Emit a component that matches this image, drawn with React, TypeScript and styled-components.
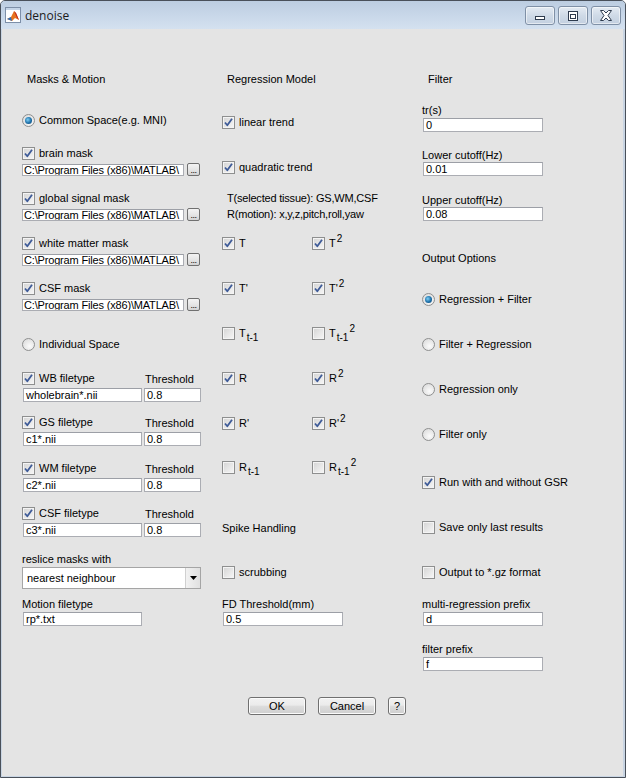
import React from "react";
import styled, { createGlobalStyle } from "styled-components";

const GlobalStyle = createGlobalStyle`
  html, body { margin: 0; padding: 0; }
  body {
    background: #ffffff;
    font-family: "Liberation Sans", Arial, sans-serif;
    font-size: 11px;
    color: #000;
  }
  * { box-sizing: border-box; }
`;

const Window = styled.div`
  width: 626px;
  height: 778px;
  display: flex;
  flex-direction: column;
  border: 1px solid #49505a;
  border-radius: 5px 5px 0 0;
  background: #c9d5e3;
  overflow: hidden;
`;

const TitleBar = styled.div`
  height: 28px;
  flex: none;
  display: flex;
  align-items: center;
  padding: 0 4px 0 4px;
  background: linear-gradient(#bccde1, #d4e1f0);
`;

const TitleText = styled.span`
  font-family: "Open Sans", "Noto Sans", sans-serif;
  font-size: 12px;
  color: #1b1b1b;
  margin-left: 4px;
  flex: 1;
`;

const CaptionGroup = styled.div`
  display: flex;
  gap: 3px;
  align-self: flex-start;
  margin-top: 5px;
`;

const CaptionButton = styled.div`
  width: 30px;
  height: 19px;
  border: 1px solid #7f90a6;
  border-radius: 3px;
  background: linear-gradient(#e4ebf3, #cfdae7 50%, #c3d0e0);
  display: flex;
  align-items: center;
  justify-content: center;
  box-shadow: inset 0 0 0 1px rgba(255, 255, 255, 0.55);
`;

const Body = styled.div`
  flex: 1;
  margin: 0 2px 1px 1px;
  background: #e4e4e4;
  display: flex;
  flex-direction: column;
`;

const Columns = styled.div`
  display: flex;
  padding-left: 20px;
  align-items: flex-start;
`;

const Column = styled.div`
  width: 200px;
  display: flex;
  flex-direction: column;
  align-items: flex-start;
`;

type Mt = { $mt?: number };

const Heading = styled.div<Mt & { $indent?: number }>`
  margin-top: ${(p) => p.$mt ?? 0}px;
  padding-left: ${(p) => p.$indent ?? 5}px;
  height: 14px;
  line-height: 14px;
  white-space: nowrap;
`;

const Label = styled.div<Mt & { $ml?: number }>`
  margin-top: ${(p) => p.$mt ?? 0}px;
  margin-left: ${(p) => p.$ml ?? 0}px;
  height: 14px;
  line-height: 14px;
  white-space: nowrap;
`;

const ThresholdLabel = styled.div`
  height: 14px;
  padding-top: 1px;
  line-height: 14px;
  white-space: nowrap;
`;

const InfoText = styled.div<Mt>`
  margin-top: ${(p) => p.$mt ?? 0}px;
  padding-left: 5px;
  line-height: 16px;
  letter-spacing: -0.2px;
  white-space: nowrap;
`;

const OptionRow = styled.div<Mt & { $w?: number }>`
  margin-top: ${(p) => p.$mt ?? 0}px;
  width: ${(p) => (p.$w ? `${p.$w}px` : "auto")};
  height: 14px;
  display: flex;
  align-items: center;
  gap: 4px;
  white-space: nowrap;
  line-height: 14px;
`;

const Row = styled.div<Mt & { $ml?: number; $gap?: number }>`
  margin-top: ${(p) => p.$mt ?? 0}px;
  margin-left: ${(p) => p.$ml ?? 0}px;
  display: flex;
  align-items: flex-start;
  gap: ${(p) => p.$gap ?? 0}px;
`;

const Box = styled.span`
  width: 13px;
  height: 13px;
  flex: none;
  border: 1px solid #8e8f8f;
  background: linear-gradient(135deg, #d4d4d4, #f7f7f7);
  box-shadow: inset 0 0 0 1px #f4f4f4;
  display: flex;
  align-items: center;
  justify-content: center;
`;

const Radio = styled.span<{ $checked?: boolean }>`
  width: 13px;
  height: 13px;
  flex: none;
  border-radius: 50%;
  border: 1px solid #8e8f8f;
  background: radial-gradient(circle at 60% 65%, #fbfbfb, #d6d6d6);
  display: flex;
  align-items: center;
  justify-content: center;
  &::after {
    content: "";
    display: ${(p) => (p.$checked ? "block" : "none")};
    width: 7px;
    height: 7px;
    border-radius: 50%;
    background: radial-gradient(circle at 40% 40%, #7fd0f6, #1d6fa8 55%, #0b3f6a);
  }
`;

const Field = styled.div<Mt & { $w: number; $h?: number; $ml?: number }>`
  margin-top: ${(p) => p.$mt ?? 0}px;
  margin-left: ${(p) => p.$ml ?? 0}px;
  width: ${(p) => p.$w}px;
  height: ${(p) => p.$h ?? 14}px;
  line-height: ${(p) => (p.$h ?? 14) - 2}px;
  border: 1px solid #abadb3;
  border-top-color: #9c9fa6;
  background: #fff;
  padding: 0 2px;
  white-space: nowrap;
  overflow: hidden;
  flex: none;
`;

const PathField = styled(Field)`
  padding: 0 1px;
  letter-spacing: -0.17px;
`;

const DotsButton = styled.div`
  width: 13px;
  height: 13px;
  margin-top: -1px;
  border: 1px solid #707070;
  border-radius: 2px;
  background: linear-gradient(#f3f3f3, #e6e6e6 50%, #d3d3d3);
  font-size: 9px;
  line-height: 13px;
  text-align: center;
  letter-spacing: -0.5px;
  overflow: hidden;
`;

const Popup = styled.div<Mt>`
  margin-top: ${(p) => p.$mt ?? 0}px;
  width: 179px;
  height: 22px;
  border: 1px solid #a5a5a5;
  background: #fff;
  display: flex;
  align-items: stretch;
`;

const PopupText = styled.span`
  flex: 1;
  padding-left: 4px;
  line-height: 20px;
  font-size: 11px;
`;

const PopupArrow = styled.span`
  width: 15px;
  flex: none;
  border-left: 1px solid #d0d0d0;
  background: linear-gradient(90deg, #f2f2f2, #e0e0e0);
  display: flex;
  align-items: center;
  justify-content: center;
`;

const Sym = styled.span`
  position: relative;
  display: inline-block;
  line-height: 14px;
`;

const Sup = styled.span`
  position: relative;
  top: -5px;
  font-size: 10px;
  margin-left: 1px;
`;

const Sub = styled.span`
  position: relative;
  top: 4px;
  font-size: 10px;
  margin-left: 1px;
`;

const Footer = styled.div`
  display: flex;
  gap: 12px;
  padding-left: 246px;
  margin-top: 26px;
`;

const PushButton = styled.div<{ $w: number }>`
  width: ${(p) => p.$w}px;
  height: 18px;
  border: 1px solid #707070;
  border-radius: 3px;
  background: linear-gradient(#f2f2f2, #ebebeb 45%, #dddddd 50%, #cfcfcf);
  box-shadow: inset 0 0 0 1px #fbfbfb;
  text-align: center;
  line-height: 16px;
  font-size: 11px;
`;

const Check = () => (
  <svg width="11" height="11" viewBox="0 0 11 11">
    <path d="M2 5.5 L4.3 8.3 L9 1.8" fill="none" stroke="#3e5b98" strokeWidth="1.8" strokeLinejoin="round" />
  </svg>
);

const CheckBox = ({ checked }: { checked?: boolean }) => <Box>{checked ? <Check /> : null}</Box>;

const CheckOption = ({
  mt,
  w,
  checked,
  children,
}: {
  mt?: number;
  w?: number;
  checked?: boolean;
  children: React.ReactNode;
}) => (
  <OptionRow $mt={mt} $w={w}>
    <CheckBox checked={checked} />
    <span>{children}</span>
  </OptionRow>
);

const RadioOption = ({ mt, checked, children }: { mt?: number; checked?: boolean; children: React.ReactNode }) => (
  <OptionRow $mt={mt}>
    <Radio $checked={checked} />
    <span>{children}</span>
  </OptionRow>
);

const MatlabIcon = () => (
  <svg width="16" height="16" viewBox="0 0 16 16">
    <rect x="0.5" y="0.5" width="15" height="15" fill="#ffffff" stroke="#7d8fa8" />
    <rect x="1" y="1" width="14" height="2" fill="#c5d5e8" />
    <polygon points="2,12 6,10 9,4 11,6 14,13 10,11 7,14" fill="#e7731d" />
    <polygon points="9,4 11,6 14,13 12,11" fill="#c3261c" />
    <polygon points="2,12 6,10 7,14" fill="#2f6db5" />
  </svg>
);

const PathRow = ({ mt }: { mt: number }) => (
  <Row $mt={mt} $gap={3}>
    <PathField $w={162} $h={12}>
      C:\Program Files (x86)\MATLAB\
    </PathField>
    <DotsButton>...</DotsButton>
  </Row>
);

const FileTypeRow = ({ mt, name }: { mt: number; name: string }) => (
  <Row $mt={mt}>
    <CheckOption w={123} checked>
      {name}
    </CheckOption>
    <ThresholdLabel>Threshold</ThresholdLabel>
  </Row>
);

const FileEdits = ({ mt, value }: { mt: number; value: string }) => (
  <Row $mt={mt} $ml={1} $gap={2}>
    <Field $w={119}>{value}</Field>
    <Field $w={57}>0.8</Field>
  </Row>
);

const PairRow = ({
  mt,
  a,
  b,
  checked,
}: {
  mt: number;
  a: React.ReactNode;
  b: React.ReactNode;
  checked: boolean;
}) => (
  <Row $mt={mt}>
    <CheckOption w={90} checked={checked}>
      {a}
    </CheckOption>
    <CheckOption checked={checked}>{b}</CheckOption>
  </Row>
);

export default function App() {
  return (
    <>
      <GlobalStyle />
      <Window>
        <TitleBar>
          <MatlabIcon />
          <TitleText>denoise</TitleText>
          <CaptionGroup>
            <CaptionButton>
              <svg width="12" height="10" viewBox="0 0 12 10">
                <rect x="1.5" y="5.5" width="9" height="3" fill="#fff" stroke="#2e3b4e" />
              </svg>
            </CaptionButton>
            <CaptionButton>
              <svg width="12" height="10" viewBox="0 0 12 10">
                <rect x="1.5" y="0.5" width="9" height="9" fill="#fff" stroke="#2e3b4e" />
                <rect x="3.5" y="3.5" width="5" height="4" fill="none" stroke="#2e3b4e" />
              </svg>
            </CaptionButton>
            <CaptionButton>
              <svg width="14" height="11" viewBox="0 0 14 11">
                <path
                  d="M1.5 0.5 H4.5 L7 3 L9.5 0.5 H12.5 L9 5.5 L12.5 10.5 H9.5 L7 8 L4.5 10.5 H1.5 L5 5.5 Z"
                  fill="#fff"
                  stroke="#2e3b4e"
                />
              </svg>
            </CaptionButton>
          </CaptionGroup>
        </TitleBar>
        <Body>
          <Columns>
            <Column>
              <Heading $mt={43}>Masks &amp; Motion</Heading>
              <RadioOption mt={27} checked>
                Common Space(e.g. MNI)
              </RadioOption>
              <CheckOption mt={19} checked>
                brain mask
              </CheckOption>
              <PathRow mt={4} />
              <CheckOption mt={15} checked>
                global signal mask
              </CheckOption>
              <PathRow mt={4} />
              <CheckOption mt={15} checked>
                white matter mask
              </CheckOption>
              <PathRow mt={4} />
              <CheckOption mt={15} checked>
                CSF mask
              </CheckOption>
              <PathRow mt={4} />
              <RadioOption mt={26}>Individual Space</RadioOption>
              <FileTypeRow mt={20} name="WB filetype" />
              <FileEdits mt={3} value="wholebrain*.nii" />
              <FileTypeRow mt={13} name="GS filetype" />
              <FileEdits mt={3} value="c1*.nii" />
              <FileTypeRow mt={15} name="WM filetype" />
              <FileEdits mt={3} value="c2*.nii" />
              <FileTypeRow mt={14} name="CSF filetype" />
              <FileEdits mt={3} value="c3*.nii" />
              <Label $mt={15}>reslice masks with</Label>
              <Popup $mt={1}>
                <PopupText>nearest neighbour</PopupText>
                <PopupArrow>
                  <svg width="7" height="4" viewBox="0 0 7 4">
                    <polygon points="0,0 7,0 3.5,4" fill="#000" />
                  </svg>
                </PopupArrow>
              </Popup>
              <Label $mt={8}>Motion filetype</Label>
              <Field $mt={1} $ml={1} $w={119}>
                rp*.txt
              </Field>
            </Column>

            <Column>
              <Heading $mt={43}>Regression Model</Heading>
              <CheckOption mt={29} checked>
                linear trend
              </CheckOption>
              <CheckOption mt={31} checked>
                quadratic trend
              </CheckOption>
              <InfoText $mt={16}>
                T(selected tissue): GS,WM,CSF
                <br />
                R(motion): x,y,z,pitch,roll,yaw
              </InfoText>
              <PairRow
                mt={14}
                checked
                a={<Sym>T</Sym>}
                b={
                  <Sym>
                    T<Sup>2</Sup>
                  </Sym>
                }
              />
              <PairRow
                mt={31}
                checked
                a={<Sym>T'</Sym>}
                b={
                  <Sym>
                    T'<Sup>2</Sup>
                  </Sym>
                }
              />
              <PairRow
                mt={31}
                checked={false}
                a={
                  <Sym>
                    T<Sub>t-1</Sub>
                  </Sym>
                }
                b={
                  <Sym>
                    T<Sub>t-1</Sub>
                    <Sup>2</Sup>
                  </Sym>
                }
              />
              <PairRow
                mt={31}
                checked
                a={<Sym>R</Sym>}
                b={
                  <Sym>
                    R<Sup>2</Sup>
                  </Sym>
                }
              />
              <PairRow
                mt={31}
                checked
                a={<Sym>R'</Sym>}
                b={
                  <Sym>
                    R'<Sup>2</Sup>
                  </Sym>
                }
              />
              <PairRow
                mt={30}
                checked={false}
                a={
                  <Sym>
                    R<Sub>t-1</Sub>
                  </Sym>
                }
                b={
                  <Sym>
                    R<Sub>t-1</Sub>
                    <Sup>2</Sup>
                  </Sym>
                }
              />
              <Heading $mt={47} $indent={0}>
                Spike Handling
              </Heading>
              <CheckOption mt={30}>scrubbing</CheckOption>
              <Label $mt={18}>FD Threshold(mm)</Label>
              <Field $mt={1} $ml={1} $w={120}>
                0.5
              </Field>
            </Column>

            <Column>
              <Heading $mt={43} $indent={6}>
                Filter
              </Heading>
              <Label $mt={17}>tr(s)</Label>
              <Field $mt={1} $ml={1} $w={120}>
                0
              </Field>
              <Label $mt={16}>Lower cutoff(Hz)</Label>
              <Field $ml={1} $w={120}>
                0.01
              </Field>
              <Label $mt={17}>Upper cutoff(Hz)</Label>
              <Field $ml={1} $w={120}>
                0.08
              </Field>
              <Label $mt={30}>Output Options</Label>
              <RadioOption mt={27} checked>
                Regression + Filter
              </RadioOption>
              <RadioOption mt={31}>Filter + Regression</RadioOption>
              <RadioOption mt={31}>Regression only</RadioOption>
              <RadioOption mt={31}>Filter only</RadioOption>
              <CheckOption mt={34} checked>
                Run with and without GSR
              </CheckOption>
              <CheckOption mt={31}>Save only last results</CheckOption>
              <CheckOption mt={31}>Output to *.gz format</CheckOption>
              <Label $mt={18}>multi-regression prefix</Label>
              <Field $mt={1} $ml={1} $w={120}>
                d
              </Field>
              <Label $mt={16}>filter prefix</Label>
              <Field $mt={1} $ml={1} $w={120}>
                f
              </Field>
            </Column>
          </Columns>
          <Footer>
            <PushButton $w={58}>OK</PushButton>
            <PushButton $w={58}>Cancel</PushButton>
            <PushButton $w={18}>?</PushButton>
          </Footer>
        </Body>
      </Window>
    </>
  );
}
